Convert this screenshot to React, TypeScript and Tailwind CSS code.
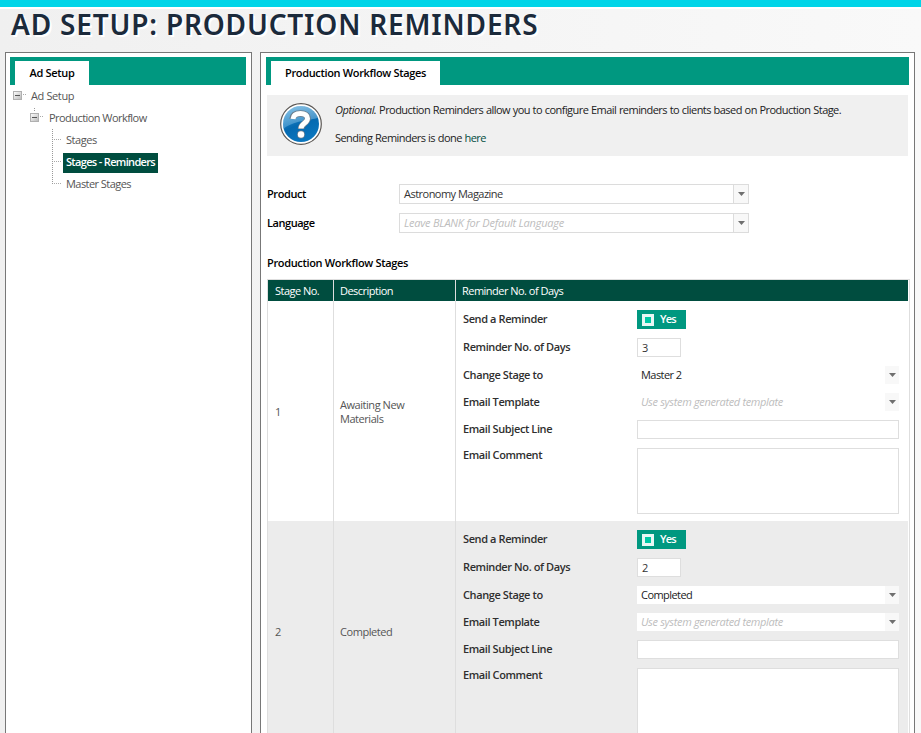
import React from "react";

const ICON_BOX = "flex shrink-0 overflow-visible";

function Minus({ stem }: { stem?: boolean }) {
  return (
    <svg width="14" height="22" viewBox="0 0 14 22" className={ICON_BOX} shapeRendering="crispEdges">
      <defs>
        <linearGradient id="knob" x1="0" y1="0" x2="1" y2="1">
          <stop offset="0" stopColor="#fff" />
          <stop offset="1" stopColor="#b8b8b8" />
        </linearGradient>
      </defs>
      {stem && <path d="M4.500 1v4" stroke="#999" strokeDasharray="1 1" />}
      <rect x="0.500" y="6.500" width="8" height="8" fill="url(#knob)" stroke="#b0b0b0" />
      <path d="M2 10.500h5" stroke="#555" />
      <path d="M10 9.500h3" stroke="#aaa" strokeDasharray="1 1" />
    </svg>
  );
}

function Branch({ last }: { last?: boolean }) {
  return (
    <svg width="11" height="22" viewBox="0 0 11 22" className={ICON_BOX} shapeRendering="crispEdges">
      <path d={last ? "M0.500 0v11" : "M0.500 0v22"} stroke="#999" strokeDasharray="1 1" />
      <path d="M2 10.500h8" stroke="#aaa" strokeDasharray="1 1" />
    </svg>
  );
}

function Arrow() {
  return (
    <svg width="7" height="4" viewBox="0 0 7 4">
      <path d="M0 0h7L3.500 4z" fill="#6f6f6f" />
    </svg>
  );
}

function HelpIcon() {
  return (
    <svg width="42" height="42" viewBox="0 0 42 42" className="shrink-0">
      <defs>
        <linearGradient id="blue" x1="0" y1="0" x2="0.4" y2="1">
          <stop offset="0" stopColor="#4ba6dc" />
          <stop offset="0.6" stopColor="#0569b0" />
          <stop offset="1" stopColor="#0a75bd" />
        </linearGradient>
        <linearGradient id="gloss" x1="0" y1="0" x2="0" y2="1">
          <stop offset="0" stopColor="#fff" stopOpacity="0.35" />
          <stop offset="1" stopColor="#8fd0f5" stopOpacity="0.35" />
        </linearGradient>
      </defs>
      <circle cx="21" cy="21" r="20.300" fill="#fff" stroke="#5b5754" strokeWidth="1.200" />
      <circle cx="21" cy="21" r="18" fill="url(#blue)" />
      <path d="M3 22A18 18 0 0 1 38 15C31 17 12 18 3.500 26z" fill="url(#gloss)" />
      <path
        d="M12.500 16C13 11.500 16.500 10.500 20.500 10.500C25 10.500 27.500 12.500 27.500 15.500C27.500 20.500 21 20 21 26"
        fill="none" stroke="#6b7c8c" strokeWidth="6.400"
      />
      <circle cx="21" cy="31.500" r="3.900" fill="#6b7c8c" />
      <path
        d="M13 16C13.500 11.500 16.500 10.500 20.500 10.500C25 10.500 27.500 12.500 27.500 15.500C27.500 20.500 21 20 21 25.500"
        fill="none" stroke="#fff" strokeWidth="5"
      />
      <circle cx="21" cy="31.500" r="3.200" fill="#fff" />
    </svg>
  );
}

function Select({ value, hint }: { value?: string; hint?: string }) {
  return (
    <div className="flex h-5 w-[350px] border border-[#dcdcdc] bg-white">
      <div className="flex flex-1 items-center pl-1">
        {value ? (
          <span className="tracking-[-0.52px] text-[#333]">{value}</span>
        ) : (
          <span className="italic tracking-[-0.23px] text-[#bdbdbd]">{hint}</span>
        )}
      </div>
      <div className="flex w-[15px] items-center justify-center border-l border-[#dcdcdc] bg-[#f8f8f8]">
        <Arrow />
      </div>
    </div>
  );
}

function InlineSelect({ value, hint }: { value?: string; hint?: string }) {
  return (
    <div className="flex h-[18px] w-[262px] bg-white">
      <div className="flex flex-1 items-center pl-1">
        {value ? (
          <span className="tracking-[-0.55px] text-[#222]">{value}</span>
        ) : (
          <span className="italic tracking-[-0.34px] text-[#bdbdbd]">{hint}</span>
        )}
      </div>
      <div className="flex w-[14px] items-center justify-center bg-[#f8f8f8]">
        <Arrow />
      </div>
    </div>
  );
}

function Field({ label, h, children }: { label: string; h: string; children: React.ReactNode }) {
  return (
    <div className={`flex ${h}`}>
      <div className="flex h-[18px] w-[174px] items-center font-semibold tracking-[-0.4px] text-[#2f2f2f]">{label}</div>
      {children}
    </div>
  );
}

function StageRow({ no, name, days, stage, shade }: {
  no: number; name: string; days: number; stage: string; shade: string;
}) {
  return (
    <div className={`flex h-[220px] w-[640px] ${shade}`}>
      <div className="flex w-[66px] items-center border-r border-[#dedede] pl-[7px] pt-0.5 text-[#555]">{no}</div>
      <div className="flex w-[122px] items-center border-r border-[#dedede] pl-1.5 pt-0.5 leading-[14px] text-[#555]">
        <span className="w-[80px] tracking-[-0.45px]">{name}</span>
      </div>
      <div className="flex flex-col gap-[9px] pl-[7px] pt-[9px]">
        <Field label="Send a Reminder" h="h-[19px]">
          <div className="flex h-[19px] w-[49px] items-center bg-[#009880] pl-[5px] text-white">
            <span className="mr-1.5 size-3 border-[3px] border-[#e9f7f4] bg-[#00c8a5]" />
            <span className="pb-px font-semibold tracking-[-0.75px]">Yes</span>
          </div>
        </Field>
        <Field label="Reminder No. of Days" h="h-[19px]">
          <div className="flex h-[19px] w-[44px] items-center border border-[#dedede] bg-white pl-1 text-[#333]">{days}</div>
        </Field>
        <Field label="Change Stage to" h="h-[18px]"><InlineSelect value={stage} /></Field>
        <Field label="Email Template" h="h-[18px]"><InlineSelect hint="Use system generated template" /></Field>
        <Field label="Email Subject Line" h="h-[19px]">
          <div className="h-[19px] w-[262px] border border-[#dedede] bg-white" />
        </Field>
        <Field label="Email Comment" h="h-[67px] -mt-0.5">
          <div className="mt-0.5 h-[66px] w-[262px] shrink-0 border border-[#dedede] bg-white" />
        </Field>
      </div>
    </div>
  );
}

function TabBar({ title, width }: { title: string; width: string }) {
  return (
    <div className="flex h-7 items-end bg-[#009880] pl-[5px]">
      <div className={`flex h-6 items-center justify-center bg-white font-semibold tracking-[-0.34px] text-black ${width}`}>{title}</div>
    </div>
  );
}

export default function App() {
  return (
    <div className="flex h-[733px] w-[921px] flex-col overflow-hidden bg-linear-to-r from-[#f0f0f0] to-[#f9f9f9] font-['Open_Sans',sans-serif] text-[11px] leading-[14px]">
      <div className="h-[9px] shrink-0 border-b-2 border-white bg-[#00d5e8]" />
      <h1 className="h-[43px] shrink-0 whitespace-nowrap pl-[11px] font-['Noto_Sans',sans-serif] text-[28px] font-semibold leading-[30px] tracking-[0.82px] text-[#1b2a3b] [text-shadow:2px_2px_0_#fff]">
        AD SETUP: PRODUCTION REMINDERS
      </h1>
      <div className="flex h-[700px] gap-2 whitespace-nowrap pl-[5px]">
        <aside className="w-[247px] shrink-0 border border-[#777] bg-white pl-1 pr-[5px] pt-1">
          <TabBar title="Ad Setup" width="w-[74px]" />
          <div className="tracking-[-0.55px] text-[#555]">
            <div className="flex h-[22px] items-center pl-[3px]"><Minus /><span className="ml-1 tracking-[-0.38px]">Ad Setup</span></div>
            <div className="flex h-[22px] items-center pl-[20px]"><Minus stem /><span className="ml-[5px]">Production Workflow</span></div>
            <div className="flex h-[22px] items-center pl-[42px]"><Branch /><span className="ml-[3px] tracking-[-0.45px]">Stages</span></div>
            <div className="flex h-[22px] items-center pl-[42px]">
              <Branch />
              <span className="mt-px flex h-5 w-[95px] items-start justify-center bg-[#004d3f] pt-0.5 font-semibold tracking-[-0.66px] text-white">Stages - Reminders</span>
            </div>
            <div className="flex h-[22px] items-center pl-[42px]"><Branch last /><span className="ml-[3px]">Master Stages</span></div>
          </div>
        </aside>
        <main className="w-[655px] shrink-0 border border-[#777] bg-white pl-[5px] pr-[5px] pt-1">
          <TabBar title="Production Workflow Stages" width="w-[169px]" />
          <div className="ml-px mt-[10px] flex h-[61px] w-[641px] bg-[#f0f0f0] pl-[13px] pt-2">
            <HelpIcon />
            <div className="ml-[13px] tracking-[-0.55px] text-[#222] [word-spacing:0.4px]">
              <p><i className="tracking-[-0.4px]">Optional.</i> Production Reminders allow you to configure Email reminders to clients based on Production Stage.</p>
              <p className="mt-[14px]">Sending Reminders is done <a className="text-[#004d3f]">here</a></p>
            </div>
          </div>
          <div className="ml-px mt-7 flex items-center">
            <span className="w-[132px] font-semibold tracking-[-0.4px]">Product</span><Select value="Astronomy Magazine" />
          </div>
          <div className="ml-px mt-[9px] flex items-center">
            <span className="w-[132px] font-semibold tracking-[-0.45px]">Language</span><Select hint="Leave BLANK for Default Language" />
          </div>
          <h2 className="ml-px mt-[23px] font-semibold tracking-[-0.34px]">Production Workflow Stages</h2>
          <div className="ml-px mt-[9px] w-[643px] border border-[#dedede]">
            <div className="flex h-[21px] w-[640px] items-center bg-[#004d3f] font-medium tracking-[-0.52px] text-white">
              <span className="flex h-full w-[66px] items-center border-r border-[#dedede] pl-[7px] pt-px">Stage No.</span>
              <span className="flex h-full w-[122px] items-center border-r border-[#dedede] pl-1.5 pt-px">Description</span>
              <span className="pl-1.5 pt-px">Reminder No. of Days</span>
            </div>
            <div className="whitespace-normal">
              <StageRow no={1} name="Awaiting New Materials" days={3} stage="Master 2" shade="bg-white" />
              <StageRow no={2} name="Completed" days={2} stage="Completed" shade="bg-[#ececec]" />
            </div>
          </div>
        </main>
      </div>
    </div>
  );
}
